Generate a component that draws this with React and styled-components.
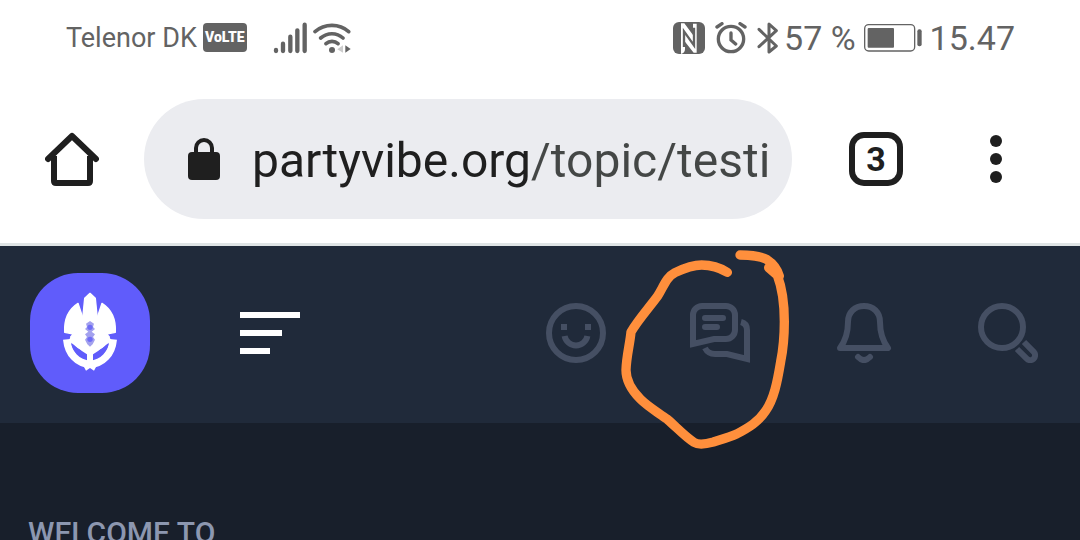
import React from "react";
import styled, { createGlobalStyle } from "styled-components";

const GlobalStyle = createGlobalStyle`
  * { box-sizing: border-box; }
  body {
    margin: 0;
    background: #181f2b;
    font-family: Roboto, "Liberation Sans", sans-serif;
  }
`;

const Screen = styled.div`
  display: flex;
  flex-direction: column;
  height: 100vh;
  overflow: hidden;
`;

const StatusBar = styled.div`
  display: flex;
  flex: none;
  justify-content: space-between;
  padding: 0 65px 0 66px;
  background: #fff;
  color: #636363;
`;

const StatusGroup = styled.div`
  display: flex;
  align-items: center;
  height: 75px;
  gap: ${(p) => p.$gap}px;
`;

const StatusText = styled.span`
  font-size: ${(p) => p.$size}px;
  line-height: 40px;
  white-space: nowrap;
`;

const Badge = styled.span`
  width: 44px;
  margin-right: 20px;
  border-radius: 4px;
  background: #636363;
  color: #fff;
  font: 900 14px/29px Roboto, sans-serif;
  text-align: center;
`;

const Toolbar = styled.header`
  display: flex;
  flex: none;
  align-items: center;
  gap: 48px;
  padding: 24px 48px 24px 36px;
  border-bottom: 3px solid #dfe4e5;
  background: #fff;
`;

const AddressArea = styled.div`
  display: flex;
  flex: 1;
  align-items: center;
  gap: 36px;
  min-width: 0;
`;

const ToolButton = styled.button`
  display: flex;
  flex: none;
  align-items: center;
  justify-content: center;
  width: 72px;
  height: 72px;
  padding: 0;
  border: 0;
  background: none;
  color: #1f1f1f;
`;

const AddressBar = styled.label`
  display: flex;
  flex: 1;
  align-items: center;
  gap: 32px;
  min-width: 0;
  height: 120px;
  padding: 0 12px 0 44px;
  border-radius: 60px;
  background: #ebecf0;
`;

const AddressInput = styled.input`
  flex: 1;
  min-width: 0;
  padding: 4px 0 0;
  border: 0;
  outline: 0;
  background: linear-gradient(90deg, #1f1f1f 280px, #444746 280px);
  background-clip: text;
  color: #444746;
  -webkit-text-fill-color: transparent;
  font: 48px/60px Roboto, sans-serif;
`;

const TabCount = styled.span`
  width: 54px;
  height: 54px;
  border: 6px solid #1f1f1f;
  border-radius: 15px;
  font: bold 34px/42px Roboto, sans-serif;
  text-align: center;
`;

const SiteHeader = styled.nav`
  display: flex;
  flex: none;
  align-items: center;
  justify-content: space-between;
  padding: 27px 42px 30px 30px;
  background: #202a3a;
`;

const NavGroup = styled.div`
  display: flex;
  align-items: center;
  gap: ${(p) => p.$gap}px;
`;

const LogoLink = styled.a`
  display: block;
  width: 120px;
  height: 120px;
  border-radius: 48px;
  overflow: hidden;
  background: #605cfb;
`;

const NavButton = styled.button`
  position: relative;
  width: 60px;
  height: 60px;
  padding: 0;
  border: 0;
  background: none;
  color: ${(p) => (p.$bright ? "#fff" : "#454f63")};
`;

const Icon = styled.svg`
  display: block;
  flex: none;
`;

const Marker = styled.svg`
  position: absolute;
  z-index: 1;
  left: -160px;
  top: -63px;
  pointer-events: none;
`;

const Content = styled.main`
  padding: 92px 28px;
`;

const Eyebrow = styled.p`
  margin: 0;
  color: #8c97b0;
  font-size: 30px;
  font-weight: 500;
  line-height: 36px;
`;

const Line = ({ size = 60, children, ...rest }) => (
  <Icon width={size} height={size} viewBox={`0 0 ${size} ${size}`} fill="none" stroke="currentColor" strokeWidth="6" aria-hidden="true" {...rest}>
    {children}
  </Icon>
);

const Signal = () => (
  <Icon width="34" height="32" viewBox="668 33 102 96" stroke="currentColor" strokeWidth="13" strokeLinecap="round">
    <path d="M677 117v3M698 98v22M720 77v43M741 58v62M763 41v79" />
  </Icon>
);

const Wifi = () => (
  <Icon width="39" height="32" viewBox="795 33 117 96" fill="none" stroke="currentColor" strokeWidth="11" strokeLinecap="round">
    <path d="M801 62C830 37 874 37 902 62M818 81C838 64 866 64 885 81M834 98C844 89 860 89 870 98" />
    <circle cx="852" cy="117" r="9" fill="currentColor" stroke="none" />
    <path d="M885 103v22l-17-10z" fill="#ccc" stroke="none" />
    <path d="M892 103v22l16-11z" fill="currentColor" stroke="none" />
  </Icon>
);

const Nfc = () => (
  <Icon width="32" height="32" viewBox="38 33 96 96">
    <rect x="38" y="33" width="96" height="96" rx="18" fill="currentColor" />
    <path d="M62 129V37H72L98 72V38H109V125H100L74 92V114Q74 126 62 129Z" fill="#fff" />
    <path d="M71 108V61L101 103V50" fill="none" stroke="currentColor" strokeWidth="7" />
  </Icon>
);

const Alarm = () => (
  <Icon width="32" height="32" viewBox="165 33 96 96" fill="none" stroke="currentColor" strokeWidth="10" strokeLinecap="round">
    <circle cx="213" cy="84" r="38" />
    <path d="M213 66v21l14 12M171 48l15-10M255 48l-15-10" />
  </Icon>
);

const Bluetooth = () => (
  <Icon width="22" height="34" viewBox="290 30 66 102" fill="none" stroke="currentColor" strokeWidth="9" strokeLinejoin="round" strokeLinecap="round">
    <path d="M296 55L348 105L326 123V39L348 59L296 107" />
  </Icon>
);

const Battery = () => (
  <Icon width="58" height="28" viewBox="609 41 174 84">
    <rect x="611" y="43" width="150" height="79" rx="12" fill="none" stroke="currentColor" strokeWidth="4" />
    <rect x="620" y="53" width="79" height="59" rx="3" fill="currentColor" />
    <rect x="769" y="57" width="13" height="51" rx="6" fill="currentColor" />
  </Icon>
);

const Emblem = () => (
  <Icon width="120" height="120" viewBox="60 69 360 360" fill="#fff">
    <path d="M240 130L256 145L262 205V300H218V205L224 145Z" stroke="#fff" strokeWidth="4" strokeLinejoin="round" />
    <path d="M204 160C174 179 162 210 164 247L190 252L182 261L200 284L232 304V212L219 205Z" stroke="#fff" strokeWidth="4" strokeLinejoin="round" />
    <path d="M276 160C306 179 318 210 316 247L290 252L298 261L280 284L248 304V212L261 205Z" stroke="#fff" strokeWidth="4" strokeLinejoin="round" />
    <path d="M170 268C174 312 202 341 240 343C278 341 306 312 310 268" fill="none" stroke="#fff" strokeWidth="22" />
    <path d="M178 268L240 308L302 268M240 300V348" fill="none" stroke="#fff" strokeWidth="18" />
    <path d="M216 340L228 362L240 354L252 362L264 340Z" />
    <path d="M183 278Q193 284 203 295Q219 303 225 323Q193 317 183 278ZM297 278Q287 284 277 295Q261 303 255 323Q287 317 297 278Z" fill="#605cfb" />
    <path d="M240 213l12 8-3 10 6 6-10 8 10 8-6 8 6 8-7 14-8 7-8-7-7-14 6-8-6-8 10-8-10-8 6-6-3-10z" fill="#a3a1ee" />
    <circle cx="240" cy="232" r="8" fill="#6f6cf5" />
    <circle cx="240" cy="268" r="8" fill="#6f6cf5" />
  </Icon>
);

export default function App() {
  return (
    <Screen>
      <GlobalStyle />
      <StatusBar>
        <StatusGroup $gap={6}>
          <StatusText $size={27}>Telenor DK</StatusText>
          <Badge>VoLTE</Badge>
          <Signal />
          <Wifi />
        </StatusGroup>
        <StatusGroup $gap={5}>
          <StatusGroup $gap={10}>
            <Nfc />
            <Alarm />
            <Bluetooth />
          </StatusGroup>
          <StatusGroup $gap={8}>
            <StatusText $size={34}>57 %</StatusText>
            <Battery />
            <StatusText $size={34}>15.47</StatusText>
          </StatusGroup>
        </StatusGroup>
      </StatusBar>

      <Toolbar>
        <AddressArea>
          <ToolButton aria-label="Home">
            <Line size={54}>
              <path d="M9 24V49Q9 51 11 51H43Q45 51 45 49V24" />
              <path d="M3 27L27 4L51 27" strokeLinecap="round" strokeLinejoin="round" />
            </Line>
          </ToolButton>
          <AddressBar>
            <Icon width="32" height="42" viewBox="0 0 32 42" fill="#1f1f1f" aria-hidden="true">
              <rect y="14" width="32" height="28" rx="4" />
              <path d="M8 15V10a8 8 0 0 1 16 0V15" fill="none" stroke="#1f1f1f" strokeWidth="4" />
            </Icon>
            <AddressInput aria-label="Address" defaultValue="partyvibe.org/topic/testi" />
          </AddressBar>
        </AddressArea>
        <ToolButton aria-label="Open tabs">
          <TabCount>3</TabCount>
        </ToolButton>
        <ToolButton aria-label="More options">
          <Icon width="12" height="48" viewBox="0 0 12 48" fill="currentColor">
            <circle cx="6" cy="6" r="6" />
            <circle cx="6" cy="24" r="6" />
            <circle cx="6" cy="42" r="6" />
          </Icon>
        </ToolButton>
      </Toolbar>

      <SiteHeader>
        <NavGroup $gap={90}>
          <LogoLink href="#" aria-label="Partyvibe">
            <Emblem />
          </LogoLink>
          <NavButton $bright aria-label="Menu">
            <Line>
              <path d="M0 12H60M0 30H42M0 48H30" />
            </Line>
          </NavButton>
        </NavGroup>
        <NavGroup $gap={84}>
          <NavButton aria-label="Activity">
            <Line>
              <circle cx="30" cy="30" r="27" />
              <path d="M15 24h6M39 24h6M18.600 33A11.600 11.600 0 0 0 41.400 33" />
            </Line>
          </NavButton>
          <NavButton aria-label="Messages">
            <Line>
              <path d="M3 41V12a9 9 0 0 1 9-9H36a9 9 0 0 1 9 9V27a9 9 0 0 1-9 9H24Z" />
              <path d="M15 15H33M15 24H27" strokeLinecap="round" />
              <path d="M51 19C55 20 57 23 57 27V56L37 51H25C20 51 17 49 15 45" />
            </Line>
            <Marker width="290" height="220" viewBox="0 0 870 660" fill="none" stroke="#ff8f3c" strokeWidth="28" strokeLinecap="round" strokeLinejoin="round">
              <path d="M592 97C568 82 545 75 515 75C485 75 460 86 435 98C408 112 402 138 383 168C358 202 324 240 303 276C300 310 289 350 288 390C288 425 305 451 331 477C355 501 385 518 412 538C440 562 465 590 492 607C508 617 532 611 550 606C575 598 597 592 620 582C655 563 686 545 706 514C732 478 742 425 752 365C760 325 763 285 763 245C763 195 757 145 742 106L716 83" />
              <path d="M630 45C665 45 690 47 711 59C731 72 742 88 748 108" />
            </Marker>
          </NavButton>
          <NavButton aria-label="Notifications">
            <Line strokeLinecap="round" strokeLinejoin="round">
              <path d="M6 45C12 37 14 30 14 19C14 9 21 3 30 3S46 9 46 19C46 30 48 37 54 45Z" />
              <path d="M24 54Q30 60 36 54" />
            </Line>
          </NavButton>
          <NavButton aria-label="Search">
            <Line>
              <circle cx="24" cy="24" r="21" />
              <path d="M39 46L48.700 55.700A4.800 4.800 0 0 0 55.700 48.900L46 39" />
            </Line>
          </NavButton>
        </NavGroup>
      </SiteHeader>

      <Content>
        <Eyebrow>WELCOME TO</Eyebrow>
      </Content>
    </Screen>
  );
}
